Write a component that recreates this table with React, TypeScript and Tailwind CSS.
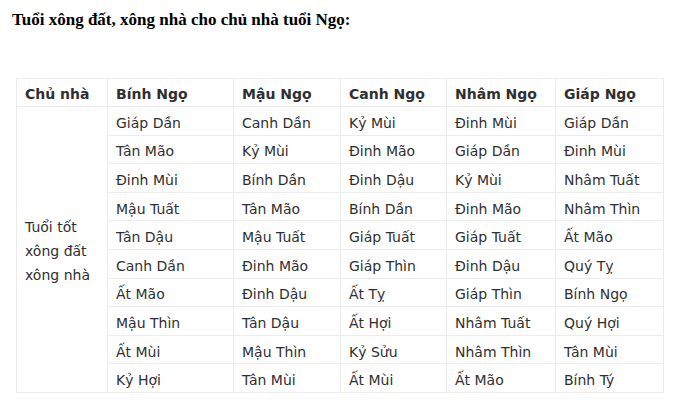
import React from "react";

const cols = ["Bính Ngọ", "Mậu Ngọ", "Canh Ngọ", "Nhâm Ngọ", "Giáp Ngọ"];

const rows: string[][] = [
    ["Giáp Dần", "Canh Dần", "Kỷ Mùi", "Đinh Mùi", "Giáp Dần"],
    ["Tân Mão", "Kỷ Mùi", "Đinh Mão", "Giáp Dần", "Đinh Mùi"],
    ["Đinh Mùi", "Bính Dần", "Đinh Dậu", "Kỷ Mùi", "Nhâm Tuất"],
    ["Mậu Tuất", "Tân Mão", "Bính Dần", "Đinh Mão", "Nhâm Thìn"],
    ["Tân Dậu", "Mậu Tuất", "Giáp Tuất", "Giáp Tuất", "Ất Mão"],
    ["Canh Dần", "Đinh Mão", "Giáp Thìn", "Đinh Dậu", "Quý Tỵ"],
    ["Ất Mão", "Đinh Dậu", "Ất Tỵ", "Giáp Thìn", "Bính Ngọ"],
    ["Mậu Thìn", "Tân Dậu", "Ất Hợi", "Nhâm Tuất", "Quý Hợi"],
    ["Ất Mùi", "Mậu Thìn", "Kỷ Sửu", "Nhâm Thìn", "Tân Mùi"],
    ["Kỷ Hợi", "Tân Mùi", "Ất Mùi", "Ất Mão", "Bính Tý"],
];

const widths = ["w-[91px]", "w-[126px]", "w-[107px]", "w-[106px]", "w-[109px]", "w-[108px]"];

export default function App() {
    return (
        <div className="w-[698px] h-[419px] bg-white overflow-hidden">
            <h1 className="pl-[12px] pt-[9px] text-[17px] leading-[22px] font-bold text-black font-['Liberation_Serif',serif]">
                Tuổi xông đất, xông nhà cho chủ nhà tuổi Ngọ:
            </h1>
            <table className="ml-[16px] mt-[47px] border-collapse table-fixed w-[648px] text-[14px] text-[#2f2f2f] font-['DejaVu_Sans','Verdana',sans-serif]">
                <thead>
                    <tr className="h-[28px]">
                        <th className={`${widths[0]} border border-[#ececec] px-[8px] pt-[4px] pb-0 text-left font-bold`}>Chủ nhà</th>
                        {cols.map((c, i) => (
                            <th key={c} className={`${widths[i + 1]} border border-[#ececec] px-[8px] pt-[4px] pb-0 text-left font-bold`}>
                                {c}
                            </th>
                        ))}
                    </tr>
                </thead>
                <tbody>
                    {rows.map((r, ri) => (
                        <tr key={ri} className="h-[28.6px]">
                            {ri === 0 && (
                                <td rowSpan={10} className="border border-[#ececec] px-[8px] pt-[4px] pb-0 align-middle leading-[24px]">
                                    Tuổi tốt xông đất xông nhà
                                </td>
                            )}
                            {r.map((v, ci) => (
                                <td key={ci} className="border border-[#ececec] px-[8px] pt-[5px] pb-0 whitespace-nowrap">
                                    {v}
                                </td>
                            ))}
                        </tr>
                    ))}
                </tbody>
            </table>
        </div>
    );
}
